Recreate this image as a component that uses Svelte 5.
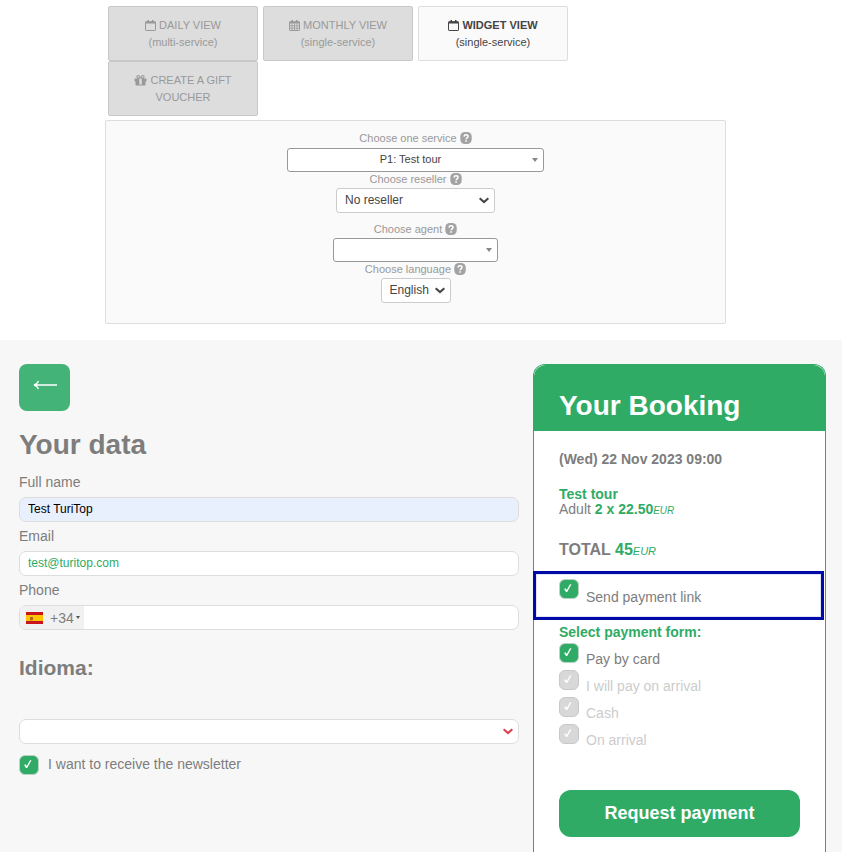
<script lang="ts">
    let service = $state("P1: Test tour");
    let reseller = $state("No reseller");
    let agent = $state("");
    let language = $state("English");

    let fullName = $state("Test TuriTop");
    let email = $state("test@turitop.com");
    let phone = $state("");
    let idioma = $state("");

    const tabs = [
        { icon: "calendar", title: "DAILY VIEW", sub: "(multi-service)", active: false },
        { icon: "grid", title: "MONTHLY VIEW", sub: "(single-service)", active: false },
        { icon: "calendar", title: "WIDGET VIEW", sub: "(single-service)", active: true },
        { icon: "gift", title: "CREATE A GIFT VOUCHER", sub: "", active: false }
    ];

    const payments = [
        { id: "card", label: "Pay by card", disabled: false },
        { id: "arrival", label: "I will pay on arrival", disabled: true },
        { id: "cash", label: "Cash", disabled: true },
        { id: "on-arrival", label: "On arrival", disabled: true }
    ];
</script>

{#snippet help()}
    <svg class="help" viewBox="0 0 12 12" aria-hidden="true">
        <rect x="0.3" y="0" width="11.4" height="12" rx="4.5" fill="#a3a3a3" />
        <path d="M4 4.6C4.1 3.3 5 2.8 6 2.8c1.200 0 2 .7 2 1.600 0 1.400-1.900 1.500-1.900 2.900" fill="none" stroke="#fff" stroke-width="1.500" />
        <rect x="5.300" y="8.200" width="1.600" height="1.500" fill="#fff" />
    </svg>
{/snippet}

{#snippet caret()}
    <svg class="caret" viewBox="0 0 6 4" aria-hidden="true"><path d="M0 0h6L3 4z" fill="#888" /></svg>
{/snippet}

{#snippet chevron(color: string)}
    <svg class="chevron" viewBox="0 0 10 7" aria-hidden="true">
        <path d="M.6 1.200 5 5l4.400-3.800" fill="none" stroke={color} stroke-width="2.100" />
    </svg>
{/snippet}

{#snippet tick(id: string, disabled: boolean)}
    <span class="tick">
        <input type="checkbox" {id} {disabled} checked />
        <svg viewBox="0 0 20 20" aria-hidden="true">
            <path d="M5.100 10 6.600 9.200 7.700 11 11 5.300 12.500 5.300 8.200 13H7z" fill="#fff" />
        </svg>
    </span>
{/snippet}

<div class="top">
    <nav class="tabs">
        {#each tabs as tab}
            <button class="tab" class:active={tab.active}>
                {#if tab.icon === "gift"}
                    <svg class="gift" viewBox="64 192 1664 1408" aria-hidden="true">
                        <path d="M1056 1356v-716h-320v716q0 25 18 38.500t46 13.500h192q28 0 46-13.500t18-38.500zM600 512h195l-126-161q-26-31-69-31-40 0-68 28t-28 68 28 68 68 28zM1288 416q0-40-28-68t-68-28q-43 0-69 31l-125 161h194q40 0 68-28t28-68zM1664 672v320q0 14-9 23t-23 9h-96v416q0 40-28 68t-68 28h-1088q-40 0-68-28t-28-68v-416h-96q-14 0-23-9t-9-23v-320q0-14 9-23t23-9h440q-93 0-158.500-65.500t-65.500-158.500 65.500-158.500 158.500-65.500q107 0 168 77l128 165 128-165q61-77 168-77 93 0 158.500 65.500t65.500 158.500-65.500 158.500-158.500 65.500h440q14 0 23 9t9 23z" fill="currentColor" />
                    </svg>
                {:else}
                    <svg class="cal" viewBox="0 0 11 11" aria-hidden="true">
                        <rect x=".5" y="1.800" width="10" height="8.700" rx=".6" fill="none" stroke="currentColor" />
                        <path d="M.5 1.500h10v2H.5zM2.500 0h1.500v2.500H2.500zM7 0h1.500v2.500H7z" fill="currentColor" />
                        {#if tab.icon === "grid"}
                            <path d="M3 3.500v7M5.500 3.500v7M8 3.500v7M.5 5.800h10M.5 8.200h10" stroke="currentColor" stroke-width=".8" />
                        {/if}
                    </svg>
                {/if}
                {tab.title}
                {#if tab.sub}<span class="sub">{tab.sub}</span>{/if}
            </button>
        {/each}
    </nav>

    <div class="panel">
        <label for="service">Choose one service {@render help()}</label>
        <div class="select dark service">
            <select id="service" bind:value={service}>
                <option>P1: Test tour</option>
            </select>
            {@render caret()}
        </div>
        <label for="reseller">Choose reseller {@render help()}</label>
        <div class="select reseller">
            <select id="reseller" bind:value={reseller}>
                <option>No reseller</option>
            </select>
            {@render chevron("#444")}
        </div>
        <label for="agent">Choose agent {@render help()}</label>
        <div class="select dark agent">
            <select id="agent" bind:value={agent}>
                <option value=""></option>
            </select>
            {@render caret()}
        </div>
        <label for="language">Choose language {@render help()}</label>
        <div class="select language">
            <select id="language" bind:value={language}>
                <option>English</option>
            </select>
            {@render chevron("#444")}
        </div>
    </div>
</div>

<div class="widget">
    <form class="data">
        <button type="button" class="back" aria-label="Back">
            <svg viewBox="0 0 24 10" aria-hidden="true">
                <path d="M24 5H2M5.500 1C4.500 3.500 3 4.500 1 5c2 .5 3.500 1.500 4.500 4" fill="none" stroke="#fff" stroke-width="1.400" />
            </svg>
        </button>

        <h2>Your data</h2>

        <label for="name">Full name</label>
        <input class="field filled" id="name" type="text" bind:value={fullName} />

        <label for="email">Email</label>
        <input class="field" id="email" type="email" bind:value={email} />

        <label for="phone">Phone</label>
        <div class="field phone">
            <button type="button" class="prefix">
                <svg class="flag" viewBox="0 0 17 12" aria-hidden="true">
                    <rect width="17" height="12" fill="#c9141e" />
                    <rect y="3" width="17" height="6" fill="#ffc400" />
                    <path d="M4 5h3v2.500l-1 1H5l-1-1z" fill="#ad6a1c" />
                </svg>
                <span>+34</span>
                <svg class="drop" viewBox="0 0 4 3" aria-hidden="true"><path d="M0 0h4L2 3z" fill="#555" /></svg>
            </button>
            <input id="phone" type="tel" bind:value={phone} />
        </div>

        <h3><label for="idioma">Idioma:</label></h3>
        <div class="select idioma">
            <select id="idioma" bind:value={idioma}>
                <option value=""></option>
            </select>
            {@render chevron("#dc3f49")}
        </div>

        <div class="newsletter">
            {@render tick("newsletter", false)}
            <label for="newsletter">I want to receive the newsletter</label>
        </div>
    </form>

    <section class="booking">
        <h2>Your Booking</h2>
        <div class="body">
            <p class="date">(Wed) 22 Nov 2023 09:00</p>
            <p class="tour"><b>Test tour</b><br />Adult <b>2 x 22.50</b><i>EUR</i></p>
            <p class="total">TOTAL <b>45</b><i>EUR</i></p>

            <div class="link">
                {@render tick("send-link", false)}
                <label for="send-link">Send payment link</label>
            </div>

            <h4>Select payment form:</h4>
            {#each payments as p}
                <div class="pay" class:off={p.disabled}>
                    {@render tick(p.id, p.disabled)}
                    <label for={p.id}>{p.label}</label>
                </div>
            {/each}

            <button class="request">Request payment</button>
        </div>
    </section>
</div>

<style>
    :global(body) {
        margin: 0;
        background: #fff;
        font-family: "Liberation Sans", Arial, sans-serif;
        color: #7d7d7d;
    }

    * {
        box-sizing: border-box;
    }

    h2, h3, h4, p {
        margin: 0;
    }

    button, input, select {
        font-family: inherit;
        margin: 0;
    }

    .top {
        padding: 6px 116px 16px 105px;
        font-size: 11px;
    }

    .tabs {
        display: flex;
        flex-wrap: wrap;
        column-gap: 5px;
        padding: 0 24px 0 3px;
        margin-bottom: 4px;
    }

    .tab {
        width: 150px;
        padding: 9px 16px;
        min-height: 55px;
        border: 1px solid #c8c8c8;
        border-radius: 2px;
        background: #ddd;
        color: #999;
        font-size: 11px;
        line-height: 17px;
    }

    .tab.active {
        border-color: #ddd;
        background: #fafafa;
        color: #444;
        font-weight: bold;
    }

    .sub {
        display: block;
        font-weight: normal;
    }

    .cal {
        width: 11px;
        height: 11px;
        vertical-align: -2px;
    }

    .gift {
        width: 13px;
        height: 11px;
        vertical-align: -2px;
    }

    .panel {
        display: flex;
        flex-direction: column;
        align-items: center;
        padding: 10px 0 20px;
        border: 1px solid #ddd;
        border-radius: 2px;
        background: #fafafa;
    }

    .panel label {
        padding-bottom: 1px;
        line-height: 15px;
        color: #999;
    }

    .panel label:first-child {
        padding-bottom: 2px;
    }

    .help {
        width: 12px;
        height: 12px;
        vertical-align: -2px;
    }

    /* the arrow shares the grid cell with its select */
    .select {
        display: grid;
        align-items: center;
        max-width: 100%;
    }

    .select select,
    .select svg {
        grid-area: 1 / 1;
    }

    .select svg {
        justify-self: end;
        pointer-events: none;
    }

    .select select {
        appearance: none;
        width: 100%;
        height: 25px;
        padding: 0 8px 2px;
        border: 1px solid #ccc;
        border-radius: 3px;
        background: #fff;
        color: #444;
        font-size: 12px;
    }

    .dark select {
        height: 24px;
        border-color: #999;
        font-size: 11px;
        text-align: center;
        padding-right: 18px;
    }

    .caret {
        width: 6px;
        height: 4px;
        margin-right: 6px;
    }

    .chevron {
        width: 10px;
        height: 7px;
        margin-right: 6px;
    }

    .service {
        width: 257px;
    }

    .reseller {
        width: 159px;
        margin-bottom: 9px;
    }

    .agent {
        width: 165px;
    }

    .language {
        width: 70px;
    }

    .widget {
        display: grid;
        grid-template-columns: minmax(0, 1fr) 293px;
        column-gap: 14px;
        padding: 24px 16px 0 19px;
        background: #f7f7f7;
        font-size: 14px;
    }

    .back {
        display: flex;
        justify-content: center;
        width: 51px;
        height: 47px;
        padding: 16px 0 0;
        border: 0;
        border-radius: 8px;
        background: #43b377;
    }

    .back svg {
        width: 24px;
        height: 10px;
    }

    .data h2 {
        margin: 17px 0 6px;
        font-size: 28px;
        line-height: 34px;
    }

    .data > label {
        display: block;
        line-height: 29px;
    }

    .field {
        display: block;
        width: 100%;
        height: 25px;
        padding: 0 8px 2px;
        border: 1px solid #ddd;
        border-radius: 7px;
        background: #fff;
        color: #2fab66;
        font-size: 12px;
    }

    .filled {
        background: #e8f0fe;
        color: #000;
    }

    .phone {
        display: flex;
        padding: 0;
        overflow: hidden;
    }

    .phone input {
        flex: 1;
        min-width: 0;
        border: 0;
        background: none;
    }

    .prefix {
        display: flex;
        align-items: center;
        width: 64px;
        padding: 0 0 0 6px;
        border: 0;
        background: #f1f1f1;
        color: #7d7d7d;
        font-size: 14px;
    }

    .flag {
        width: 17px;
        height: 12px;
        margin-right: 7px;
    }

    .drop {
        width: 4px;
        height: 3px;
        margin-left: 2px;
    }

    .data h3 {
        margin: 25px 0 38px;
        font-size: 21px;
        line-height: 26px;
    }

    .idioma select {
        border-color: #ddd;
        border-radius: 7px;
    }

    .newsletter {
        display: flex;
        gap: 9px;
        margin-top: 11px;
        line-height: 18px;
    }

    .tick {
        display: grid;
        width: 20px;
        height: 20px;
        flex: none;
    }

    .tick input,
    .tick svg {
        grid-area: 1 / 1;
        width: 20px;
        height: 20px;
    }

    .tick input {
        appearance: none;
        border: 1px solid #bcd2c5;
        border-radius: 6px;
        background: #2fab66;
    }

    .tick svg {
        pointer-events: none;
    }

    .booking {
        border: 1px solid #2fab66;
        border-bottom: 0;
        border-radius: 12px 12px 0 0;
        background: #fff;
    }

    .booking h2 {
        padding: 24px 25px 8px;
        border-radius: 12px 12px 0 0;
        background: #2fab66;
        color: #fff;
        font-size: 28px;
        line-height: 34px;
    }

    .body {
        padding: 20px 25px 15px;
    }

    .date {
        font-weight: bold;
        line-height: 16px;
    }

    .tour {
        margin: 20px 0 22px;
        line-height: 15px;
    }

    .tour b,
    .body i,
    .total b,
    h4 {
        color: #2fab66;
    }

    .tour i {
        font-size: 10px;
    }

    .total {
        font-size: 16px;
        font-weight: bold;
        line-height: 20px;
    }

    .total i {
        font-size: 11px;
        font-weight: normal;
    }

    .link {
        display: flex;
        gap: 7px;
        height: 49px;
        margin: 10px -24px 2px -26px;
        padding: 5px 23px;
        border: 3px solid #000aa6;
        box-shadow: inset 0 0 0 1px #e3e3f6;
    }

    .link label {
        margin-top: 8px;
        line-height: 20px;
    }

    h4 {
        margin-bottom: 1px;
        font-size: 14px;
        line-height: 20px;
    }

    .pay {
        display: flex;
        gap: 7px;
        height: 27px;
    }

    .pay label {
        margin-top: 6px;
        line-height: 20px;
    }

    .off label {
        color: #ccc;
    }

    .off .tick input {
        border-color: #c8c8c8;
        background: #d8d8d8;
    }

    .request {
        display: block;
        width: 100%;
        height: 47px;
        margin-top: 39px;
        border: 0;
        border-radius: 12px;
        background: #2fab66;
        color: #fff;
        font-size: 18px;
        font-weight: bold;
    }
</style>
